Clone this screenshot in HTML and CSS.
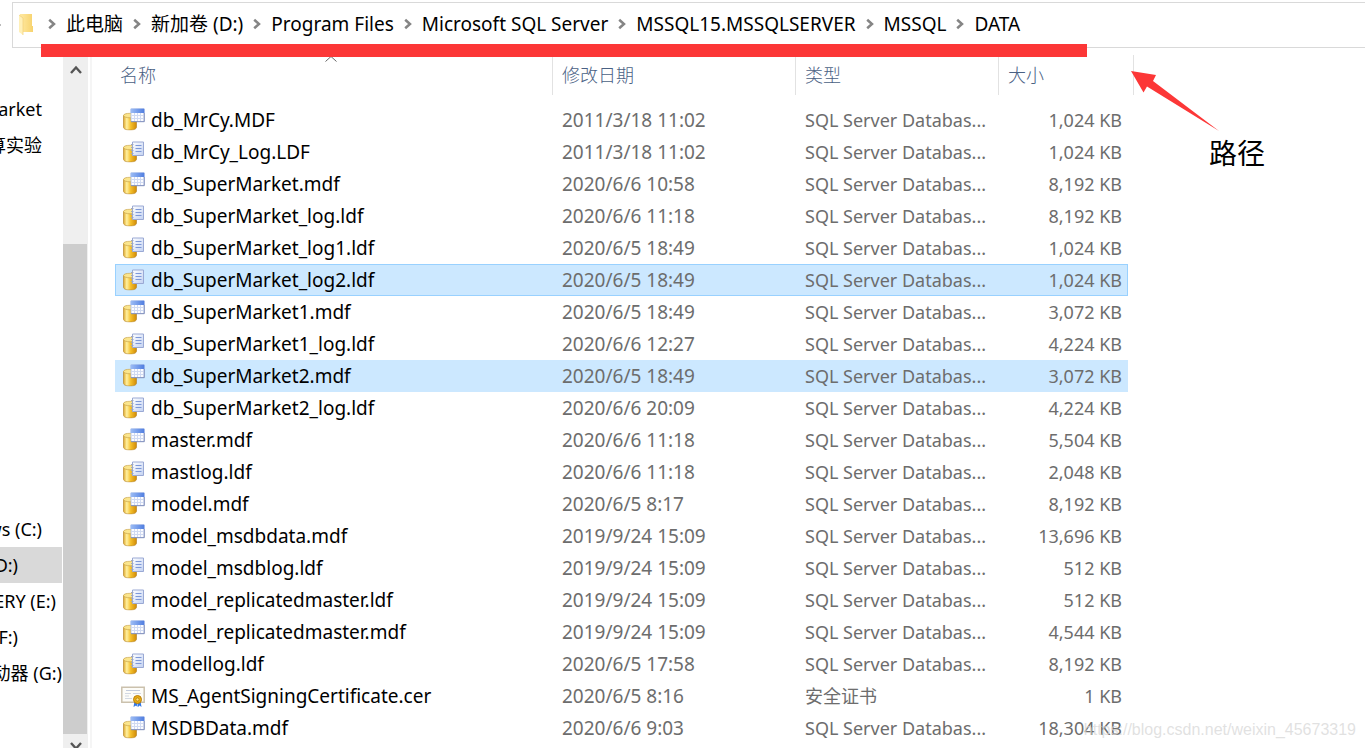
FILE: index.html
```html
<!DOCTYPE html>
<html lang="zh-CN">
<head>
<meta charset="utf-8">
<title>DATA</title>
<link rel="stylesheet" href="styles.css">
</head>
<body>
<svg class="sprite" aria-hidden="true">
  <defs>
    <linearGradient id="gold" x1="0" x2="1" y1="0" y2="0">
      <stop offset="0" stop-color="#dfa82c"/><stop offset=".25" stop-color="#fff0a0"/><stop offset=".55" stop-color="#f5c02c"/><stop offset="1" stop-color="#d08a06"/>
    </linearGradient>
    <linearGradient id="blue" x1="0" x2="1" y1="0" y2="0">
      <stop offset="0" stop-color="#9dbdf5"/><stop offset="1" stop-color="#4f7de0"/>
    </linearGradient>
    <linearGradient id="sheet" x1="0" x2="1" y1="0" y2="1">
      <stop offset="0" stop-color="#fff"/><stop offset="1" stop-color="#c3d2f2"/>
    </linearGradient>
    <linearGradient id="folder" x1="0" x2="1" y1="0" y2="0">
      <stop offset="0" stop-color="#ffe9a2"/><stop offset="1" stop-color="#f7d36e"/>
    </linearGradient>
    <symbol id="drum" viewBox="0 0 14 18">
      <path d="M.5 3v11.5C.5 16.500 3 17.500 7 17.500s6.500-1 6.500-3V3z" fill="url(#gold)" stroke="#b98a2e" stroke-width=".7"/>
      <ellipse cx="7" cy="3" rx="6.500" ry="2.300" fill="#fbe58c" stroke="#c9a44a" stroke-width=".7"/>
    </symbol>
    <symbol id="mdf" viewBox="0 0 24 24">
      <use href="#drum" x="2" y="4.500" width="14" height="18"/>
      <path d="M10 1h13v12.500H10z" fill="#fbfcff" stroke="#a9b6dc" stroke-width=".8"/>
      <path d="M9.600 .6h13.800V5H9.600z" fill="url(#blue)"/>
      <path d="M10.500 7.500h12M10.500 10.500h12M13.500 5v8M16.500 5v8M19.500 5v8" stroke="#d0daf2" stroke-width="1"/>
      <path d="M10 13.700h13.300V5" fill="none" stroke="#7d8cba" stroke-width=".9"/>
    </symbol>
    <symbol id="ldf" viewBox="0 0 24 24">
      <use href="#drum" x="2" y="4.500" width="14" height="18"/>
      <path d="M11.500 2h11v13.500h-11z" fill="url(#sheet)" stroke="#9aa9d4"/>
      <path d="M14.500 5.500h6M14.500 8.500h6M14.500 11.500h6" stroke="#7d98d8"/>
      <path d="M10 4.500h2.500M10 7.500h2.500M10 10.500h2.500M10 13.500h2.500" stroke="#a0a8bd"/>
    </symbol>
    <symbol id="cer" viewBox="0 0 24 24">
      <path d="M.8 3.300h22.400v15H.8z" fill="#fdfcf8" stroke="#cbc1ad" stroke-width="1.500"/>
      <path d="M5 6.500h14" stroke="#c3cbdb"/>
      <path d="M4 9.500h6M12 9.500h8M4 12h4M4 14.500h7" stroke="#d2d8e2"/>
      <path d="M13.500 17l-1 6 2.500-1.500L16.500 23v-5zM17 18v5l1.500-1.500L20.500 23l-1-6z" fill="#3478e5"/>
      <circle cx="16.500" cy="15.500" r="4" fill="#e9ac15" stroke="#ba7f0a"/>
      <circle cx="16.500" cy="15.500" r="1.600" fill="#ffe07a" stroke="#a8760c" stroke-width=".7"/>
    </symbol>
    <symbol id="chev" viewBox="0 0 8 12"><path d="M1.200 1.700L6 6 1.200 10.300" fill="none" stroke="#858585" stroke-width="2.500"/></symbol>
  </defs>
</svg>
<div class="window">
  <header class="topbar">
    <span class="divider"></span>
    <nav class="address" aria-label="路径栏">
      <svg class="folder" viewBox="0 0 14 21"><path d="M1 0h12v12h1v6H4L1 17z" fill="url(#folder)"/><path d="M0 1l4 3v17l-4-3z" fill="#fff0b8"/><path d="M0 1l4 3v17" fill="none" stroke="#f0cf75" stroke-width=".7"/></svg>
      <svg class="chev"><use href="#chev"/></svg><a href="#">此电脑</a>
      <svg class="chev"><use href="#chev"/></svg><a href="#">新加卷 (D:)</a>
      <svg class="chev"><use href="#chev"/></svg><a href="#">Program Files</a>
      <svg class="chev"><use href="#chev"/></svg><a href="#">Microsoft SQL Server</a>
      <svg class="chev"><use href="#chev"/></svg><a href="#">MSSQL15.MSSQLSERVER</a>
      <svg class="chev"><use href="#chev"/></svg><a href="#">MSSQL</a>
      <svg class="chev"><use href="#chev"/></svg><a href="#">DATA</a>
    </nav>
  </header>
  <div class="body">
    <nav class="tree" aria-label="文件夹">
      <div class="group">
        <a href="#" class="near">arket</a>
        <a href="#" class="near">算实验</a>
      </div>
      <div class="group drives">
        <a href="#" class="near">ws (C:)</a>
        <a href="#" class="far current">D:)</a>
        <a href="#" class="close">ERY (E:)</a>
        <a href="#" class="far">F:)</a>
        <a href="#">动器 (G:)</a>
      </div>
    </nav>
    <div class="scrollbar">
      <button type="button" aria-label="向上滚动"><svg viewBox="0 0 12 10"><path d="M1 8l5-5.500L11 8" fill="none" stroke="#555" stroke-width="2.400"/></svg></button>
      <div class="track"><div class="thumb"></div></div>
      <button type="button" aria-label="向下滚动"><svg viewBox="0 0 12 10"><path d="M1 2l5 5.500L11 2" fill="none" stroke="#555" stroke-width="2.400"/></svg></button>
    </div>
    <main class="files">
      <table>
        <colgroup><col class="c-name"><col class="c-date"><col class="c-type"><col class="c-size"></colgroup>
        <thead><tr>
          <th scope="col">名称<svg class="sort" viewBox="0 0 12 6"><path d="M.5 5.500L6 .5l5.500 5" fill="none" stroke="#666"/></svg></th>
          <th scope="col">修改日期</th><th scope="col">类型</th><th scope="col">大小</th>
        </tr></thead>
        <tbody id="rows"></tbody>
      </table>
    </main>
  </div>
  <div class="underline"></div>
  <div class="note">
    <svg viewBox="0 0 90 62"><path d="M0 0l25 4-3 6 66 50L16 15.500 12.500 21.500z" fill="#fc3737"/></svg>
    <span>路径</span>
  </div>
  <div class="watermark">https://blog.csdn.net/weixin_45673319</div>
</div>
<script src="files.js"></script>
</body>
</html>
```
FILE: styles.css
```css
* { box-sizing: border-box; }

body {
  margin: 0;
  background: #fff;
  color: #000;
  font: 18px/24px "Noto Sans", "Noto Sans CJK SC", sans-serif;
}

a { color: inherit; text-decoration: none; }
.sprite { position: absolute; width: 0; height: 0; }

.window {
  position: relative;
  display: flex;
  flex-direction: column;
  height: 100vh;
  overflow: hidden;
}

.topbar {
  display: flex;
  align-items: center;
  flex: none;
  padding-top: 2px;
}
.divider { width: 1px; height: 2px; margin-right: 11px; background: #bbb; }
.address {
  flex: 1;
  display: flex;
  align-items: center;
  gap: 10px;
  height: 46px;
  padding: 0 0 2px 6px;
  border: 1px solid #d9d9d9;
  border-right: 0;
  font-size: 19px;
  white-space: nowrap;
}
.folder { width: 14px; height: 21px; margin-right: 5px; }
.chev { width: 8px; height: 12px; flex: none; }

.body { flex: 1; display: flex; min-height: 0; }

.tree {
  flex: none;
  width: 63px;
  padding: 43px 1px 0 0;
  overflow: hidden;
}
.tree a {
  display: flex;
  align-items: center;
  justify-content: flex-end;
  height: 36px;
  white-space: nowrap;
}
.tree .near { padding-right: 20px; }
.tree .far { padding-right: 44px; }
.tree .close { padding-right: 6px; }
.tree .current { background: #d9d9d9; }
.drives { margin-top: 348px; }

.scrollbar {
  flex: none;
  display: flex;
  flex-direction: column;
  width: 25px;
  margin-bottom: -10px;
  background: #efefef;
}
.scrollbar button {
  height: 24px;
  padding: 0;
  border: 0;
  background: none;
}
.scrollbar button:first-child { height: 36px; padding-top: 8px; }
.scrollbar svg { display: block; width: 12px; height: 10px; margin: 0 auto; }
.track { flex: 1; padding: 160px 1px 0 0; }
.thumb { height: 100%; background: #cdcdcd; }

.files {
  flex: 1;
  margin-left: 2px;
  padding-left: 23px;
  border-left: 2px solid #f5f5f5;
}
table {
  table-layout: fixed;
  width: 1013px;
  border-collapse: separate;
  border-spacing: 0;
}
.c-name { width: 438px; }
.c-date { width: 243px; }
.c-type { width: 203px; }

th {
  position: relative;
  height: 56px;
  padding: 0 0 2px 9px;
  color: #4a6184;
  font-weight: 300;
  text-align: left;
}
th:first-child { padding-left: 5px; }
th::after {
  content: "";
  position: absolute;
  top: 7px;
  right: 0;
  width: 1px;
  height: 40px;
  background: #e2e2e2;
}
th:last-child::after { right: -6px; }
.sort { position: absolute; left: 50%; top: 8px; width: 12px; height: 6px; margin-left: -9px; }

td {
  height: 32px;
  padding: 0 0 0 9px;
  color: #6d6d6d;
  white-space: nowrap;
}
td:last-child { padding-right: 6px; text-align: right; }
td:first-child { padding-left: 6px; color: #000; }
td:first-child, td:nth-child(2) { font-size: 19px; }
.name { display: flex; align-items: center; gap: 6px; }
.name svg { width: 24px; height: 24px; }

.selected td { background: #cce8ff; }
.focused td { box-shadow: inset 0 1px #99d1ff, inset 0 -1px #99d1ff; }
.focused td:first-child { box-shadow: inset 1px 1px #99d1ff, inset 0 -1px #99d1ff; }
.focused td:last-child { box-shadow: inset 0 1px #99d1ff, inset -1px -1px #99d1ff; }

.underline {
  position: absolute;
  left: 41px;
  top: 44px;
  width: 1046px;
  height: 13px;
  background: #fc3737;
}
.note {
  position: absolute;
  left: 1131px;
  top: 71px;
  display: flex;
  flex-direction: column;
  width: 134px;
  font-size: 28px;
  line-height: 40px;
}
.note svg { width: 90px; height: 62px; }
.note span { align-self: flex-end; }
.watermark {
  position: absolute;
  right: 9px;
  bottom: 6px;
  color: rgba(215, 215, 215, .75);
  font: 16px/24px "Liberation Sans", sans-serif;
}
```
FILE: files.js
```js
const files = [
  ["db_MrCy.MDF", "2011/3/18 11:02", "1,024 KB"],
  ["db_MrCy_Log.LDF", "2011/3/18 11:02", "1,024 KB"],
  ["db_SuperMarket.mdf", "2020/6/6 10:58", "8,192 KB"],
  ["db_SuperMarket_log.ldf", "2020/6/6 11:18", "8,192 KB"],
  ["db_SuperMarket_log1.ldf", "2020/6/5 18:49", "1,024 KB"],
  ["db_SuperMarket_log2.ldf", "2020/6/5 18:49", "1,024 KB", "selected focused"],
  ["db_SuperMarket1.mdf", "2020/6/5 18:49", "3,072 KB"],
  ["db_SuperMarket1_log.ldf", "2020/6/6 12:27", "4,224 KB"],
  ["db_SuperMarket2.mdf", "2020/6/5 18:49", "3,072 KB", "selected"],
  ["db_SuperMarket2_log.ldf", "2020/6/6 20:09", "4,224 KB"],
  ["master.mdf", "2020/6/6 11:18", "5,504 KB"],
  ["mastlog.ldf", "2020/6/6 11:18", "2,048 KB"],
  ["model.mdf", "2020/6/5 8:17", "8,192 KB"],
  ["model_msdbdata.mdf", "2019/9/24 15:09", "13,696 KB"],
  ["model_msdblog.ldf", "2019/9/24 15:09", "512 KB"],
  ["model_replicatedmaster.ldf", "2019/9/24 15:09", "512 KB"],
  ["model_replicatedmaster.mdf", "2019/9/24 15:09", "4,544 KB"],
  ["modellog.ldf", "2020/6/5 17:58", "8,192 KB"],
  ["MS_AgentSigningCertificate.cer", "2020/6/5 8:16", "1 KB"],
  ["MSDBData.mdf", "2020/6/6 9:03", "18,304 KB"]
];

document.getElementById("rows").innerHTML = files.map(([name, date, size, state = ""]) => {
  const ext = name.split(".").pop().toLowerCase();
  const type = ext === "cer" ? "安全证书" : "SQL Server Databas...";
  return `<tr class="${state}"><td><div class="name"><svg><use href="#${ext}"/></svg><span>${name}</span></div></td><td>${date}</td><td>${type}</td><td>${size}</td></tr>`;
}).join("");
```
